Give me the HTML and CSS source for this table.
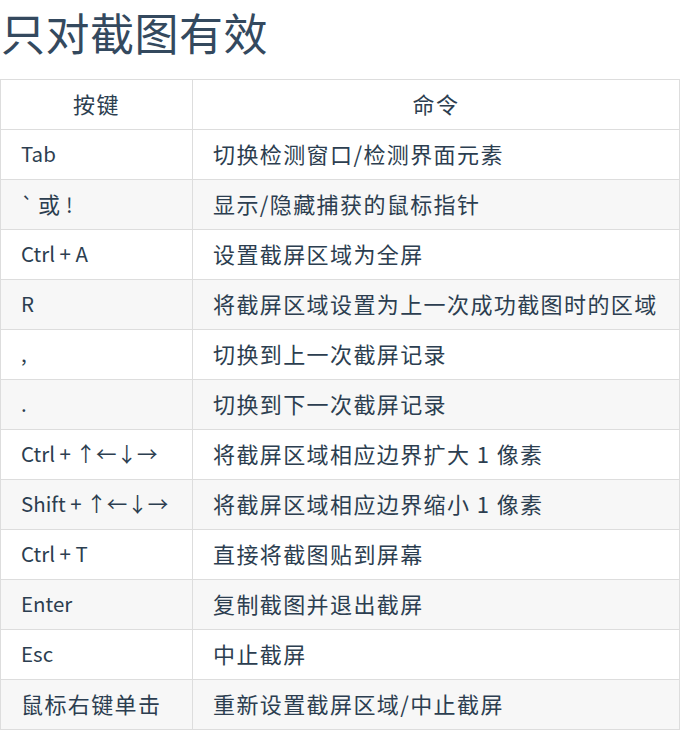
FILE: index.html
```html
<!DOCTYPE html>
<html lang="zh-CN">
<head>
<meta charset="utf-8">
<title>只对截图有效</title>
<link rel="stylesheet" href="styles.css">
</head>
<body>
<h1 class="title">只对截图有效</h1>
<table class="keys">
  <colgroup><col class="col-key"><col class="col-cmd"></colgroup>
  <thead>
    <tr><th><span class="zh">按键</span></th><th><span class="zh">命令</span></th></tr>
  </thead>
  <tbody>
    <tr><td>Tab</td><td class="cmd">切换检测窗口/检测界面元素</td></tr>
    <tr><td>` <span class="zh">或</span> !</td><td class="cmd">显示/隐藏捕获的鼠标指针</td></tr>
    <tr><td>Ctrl + A</td><td class="cmd">设置截屏区域为全屏</td></tr>
    <tr><td>R</td><td class="cmd">将截屏区域设置为上一次成功截图时的区域</td></tr>
    <tr><td>,</td><td class="cmd">切换到上一次截屏记录</td></tr>
    <tr><td>.</td><td class="cmd">切换到下一次截屏记录</td></tr>
    <tr><td>Ctrl + ↑←↓→</td><td class="cmd">将截屏区域相应边界扩大 1 像素</td></tr>
    <tr><td>Shift + ↑←↓→</td><td class="cmd">将截屏区域相应边界缩小 1 像素</td></tr>
    <tr><td>Ctrl + T</td><td class="cmd">直接将截图贴到屏幕</td></tr>
    <tr><td>Enter</td><td class="cmd">复制截图并退出截屏</td></tr>
    <tr><td>Esc</td><td class="cmd">中止截屏</td></tr>
    <tr><td><span class="zh">鼠标右键单击</span></td><td class="cmd">重新设置截屏区域/中止截屏</td></tr>
  </tbody>
</table>
</body>
</html>
```
FILE: styles.css
```css
html, body {
  margin: 0;
  padding: 0;
  background: #ffffff;
}
body {
  font-family: "Noto Sans CJK SC", "Noto Sans", sans-serif;
  color: #2c3e50;
}
.title {
  margin: 0 0 15px 0;
  padding-left: 1px;
  font-size: 44px;
  line-height: 64px;
  font-weight: 400;
  color: #34495e;
  letter-spacing: 0.5px;
}
.keys {
  width: 680px;
  border-collapse: collapse;
  table-layout: fixed;
  font-size: 20.5px;
}
.col-key { width: 192px; }
.keys th, .keys td {
  border: 1px solid #dddddd;
  height: 50px;
  padding: 0 20px 3px 20px;
  box-sizing: border-box;
  line-height: 30px;
  font-weight: 400;
  white-space: nowrap;
  vertical-align: middle;
}
.keys th {
  text-align: center;
}
.keys td {
  text-align: left;
}
.zh, .keys td.cmd {
  font-size: 22px;
  letter-spacing: 1.4px;
}
.keys tbody tr:nth-child(2n) {
  background: #f7f7f7;
}
```
